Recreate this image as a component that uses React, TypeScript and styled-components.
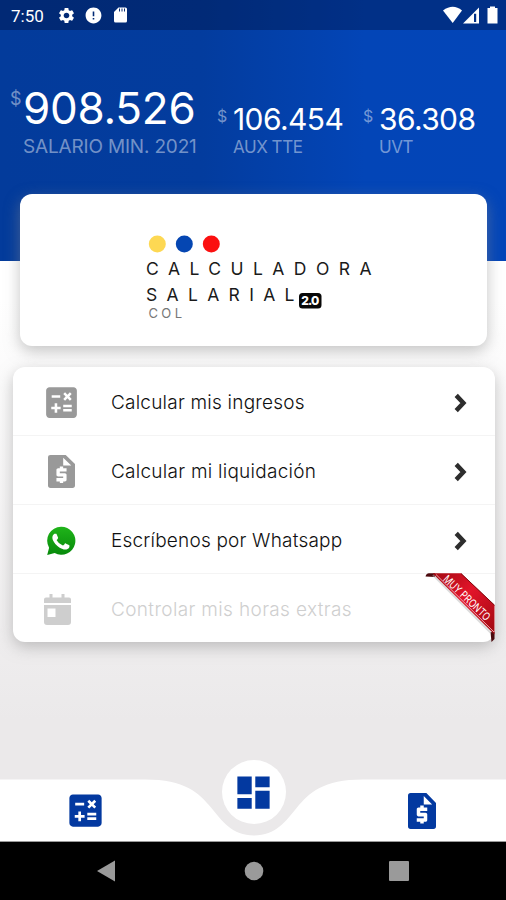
import React from "react";
import styled, { createGlobalStyle } from "styled-components";
import { MdCalculate, MdSettings, MdError, MdDashboard } from "react-icons/md";

const GlobalStyle = createGlobalStyle`
  *, *::before, *::after { box-sizing: border-box; }
  body { margin: 0; background: #ebe9ea; font-family: Inter, Roboto, sans-serif; }
`;

const Screen = styled.div`
  width: 506px;
  height: 900px;
  overflow: hidden;
  display: flex;
  flex-direction: column;
  background: linear-gradient(180deg, #ffffff 0, #ffffff 300px, #ebe9ea 720px);
`;

const Header = styled.header`
  height: 261px;
  flex: none;
  background: linear-gradient(90deg, #033b9b 0%, #033c9e 40%, #0345b7 72%, #0345b8 100%);
`;

const StatusBar = styled.div`
  height: 30px;
  padding: 0 7px 0 11px;
  display: flex;
  align-items: center;
  background: rgba(0, 10, 50, 0.36);
  color: #fff;
`;

const Clock = styled.span`
  width: 46px;
  font: 400 17px/30px Roboto, sans-serif;
  padding-top: 2px;
`;

const StatusIcons = styled.div`
  display: flex;
  align-items: center;
  gap: 8px;
  flex: 1;
`;

const SignalIcons = styled.div`
  display: flex;
  align-items: center;
`;

const Stats = styled.div`
  display: flex;
  align-items: flex-end;
  padding-left: 10px;
  height: 127px;
`;

const Stat = styled.div<{ $width: number }>`
  display: flex;
  width: ${(p) => p.$width}px;
`;

const Currency = styled.span<{ $large?: boolean }>`
  width: ${(p) => (p.$large ? 13 : 16)}px;
  font-size: ${(p) => (p.$large ? 18 : 16)}px;
  line-height: 20px;
  padding-top: ${(p) => (p.$large ? 3 : 2)}px;
  color: rgba(255, 255, 255, 0.45);
`;

const Amount = styled.div<{ $large?: boolean }>`
  font-size: ${(p) => (p.$large ? 44 : 30)}px;
  line-height: ${(p) => (p.$large ? 44 : 30)}px;
  letter-spacing: ${(p) => (p.$large ? -0.25 : -0.6)}px;
  color: #fff;
  white-space: nowrap;
`;

const Caption = styled.div<{ $large?: boolean }>`
  font-size: ${(p) => (p.$large ? 19 : 17)}px;
  line-height: 20px;
  margin-top: ${(p) => (p.$large ? 7 : 3)}px;
  letter-spacing: ${(p) => (p.$large ? -0.18 : -0.45)}px;
  color: rgba(255, 255, 255, 0.45);
  white-space: nowrap;
`;

const LogoCard = styled.section`
  flex: none;
  width: 467px;
  height: 152px;
  margin: -67px 0 0 20px;
  border-radius: 12px;
  background: #fff;
  box-shadow: 0 5px 15px rgba(140, 140, 140, 0.5);
`;

const Menu = styled.nav`
  flex: none;
  width: 482px;
  margin: 21px 0 0 13px;
  border-radius: 12px;
  background: #fff;
  box-shadow: 0 5px 15px rgba(140, 140, 140, 0.5);
`;

const MenuRow = styled.div<{ $disabled?: boolean }>`
  position: relative;
  height: 69px;
  padding: 3px 28px 0 28px;
  display: flex;
  align-items: center;
  color: ${(p) => (p.$disabled ? "#cfcfcf" : "#101010")};
  &:first-child { height: 68px; }
  & + & { border-top: 1px solid #f4f4f4; }
`;

const RowIcon = styled.div<{ $indent?: number }>`
  width: 70px;
  height: 40px;
  padding-left: ${(p) => p.$indent ?? 0}px;
  display: flex;
  align-items: center;
  color: #999;
  svg { display: block; }
`;

const RowLabel = styled.span<{ $spacing: number }>`
  flex: 1;
  font-size: 19px;
  font-weight: 300;
  line-height: 24px;
  letter-spacing: ${(p) => p.$spacing}px;
  white-space: nowrap;
`;

const Ribbon = styled.div`
  position: absolute;
  right: 0;
  top: -1px;
  width: 72px;
  height: 70px;
  svg { display: block; overflow: visible; }
`;

const BottomBar = styled.footer`
  margin-top: auto;
  flex: none;
  height: 82px;
  position: relative;
  border-bottom: 1px solid #9a9a9a;
`;

const BarShape = styled.svg`
  position: absolute;
  inset: 0;
`;

const BarItems = styled.div`
  position: relative;
  height: 81px;
  display: grid;
  grid-template-columns: 170px 167px 170px;
  justify-items: center;
  align-items: end;
  color: #0339a0;
  svg { display: block; }
`;

const BarItem = styled.div`
  height: 61px;
  display: flex;
  align-items: center;
`;

const HomeButton = styled.div`
  width: 64px;
  height: 64px;
  margin-bottom: 17px;
  border-radius: 50%;
  background: #fff;
  display: flex;
  align-items: center;
  justify-content: center;
`;

const SystemNav = styled.div`
  flex: none;
  height: 58px;
  background: #000;
  display: grid;
  grid-template-columns: 212px 83px 208px;
  justify-items: center;
  align-items: center;
  svg { display: block; }
`;

const MoneyFile = ({ width, height }: { width: number; height: number }) => (
  <svg width={width} height={height} viewBox="4 2 16 20" preserveAspectRatio="none" fill="currentColor">
    <path
      fillRule="evenodd"
      d="M5.5 2H14.5L20 7.5V20.5Q20 22 18.5 22H5.5Q4 22 4 20.5V3.5Q4 2 5.5 2ZM13 3.6V8.4H17.8ZM15 12H11v1h3c.55 0 1 .45 1 1v3c0 .55-.45 1-1 1h-1v1h-2v-1H9v-2h4v-1h-3c-.55 0-1-.45-1-1v-3c0-.55.45-1 1-1h1V9h2v1h2Z"
    />
  </svg>
);

const Chevron = () => (
  <svg width="13" height="20" viewBox="0 0 13 20">
    <path d="M2.2 2.4 9.4 10 2.2 17.6" fill="none" stroke="#2d2d2d" strokeWidth="4.5" />
  </svg>
);

const Whatsapp = () => (
  <svg width="30" height="30" viewBox="0 0 30 30">
    <defs>
      <linearGradient id="wa" x1="0" y1="0" x2="0" y2="1">
        <stop offset="0" stopColor="#20b41a" />
        <stop offset="1" stopColor="#078a0b" />
      </linearGradient>
    </defs>
    <path d="M15 .7A14 14 0 1 1 8.7 27L1.2 29 3.1 21.8A14 14 0 0 1 15 .7Z" fill="url(#wa)" />
    <path
      transform="translate(-1.7 -1.200) scale(1.400)"
      fill="#fff"
      d="M17.3 14.3c-.3-.15-1.8-.9-2-1s-.5-.15-.7.15-.8 1-1 1.150-.35.2-.65.05a8 8 0 0 1-4-3.500c-.3-.5.3-.5.85-1.600.1-.2.05-.35 0-.5L8.900 6.900c-.25-.6-.5-.5-.7-.5h-.6c-.2 0-.55.1-.8.4s-1.050 1-1.050 2.500 1.080 2.900 1.230 3.100 2.100 3.200 5.150 4.500c1.900.8 2.650.9 3.600.75.6-.1 1.800-.7 2.050-1.450s.25-1.300.2-1.450-.3-.2-.6-.35Z"
    />
  </svg>
);

const CalendarIcon = () => (
  <svg width="27" height="32" viewBox="0 0 27 32" fill="#cecece">
    <path d="M5.500 0H8.500v3.500h9V0h3v3.500H25q2 0 2 2V9H0V5.500q0-2 2-2h3.500Z" />
    <path fillRule="evenodd" d="M0 11h27v17q0 3-3 3H3q-3 0-3-3ZM3.500 14.500v8.500h8v-8.500Z" />
  </svg>
);

const Logo = () => (
  <svg width="467" height="152" viewBox="20 194 467 152">
    <circle cx="157.300" cy="244" r="8.500" fill="#fdd853" />
    <circle cx="184.300" cy="244" r="8.500" fill="#0546b2" />
    <circle cx="211.300" cy="244" r="8.500" fill="#fb1010" />
    <g fontFamily="Inter, sans-serif" fill="#1a1a1a">
      <text x="146" y="274.700" fontSize="17.500" textLength="225.500" lengthAdjust="spacing">CALCULADORA</text>
      <text x="146" y="300.700" fontSize="17.500" textLength="148.500" lengthAdjust="spacing">SALARIAL</text>
      <text x="148.500" y="318" fontSize="13" fill="#777" textLength="33.500" lengthAdjust="spacing">COL</text>
    </g>
    <rect x="299" y="293" width="22.500" height="15.500" rx="3.500" fill="#080808" />
    <text x="301.300" y="305.200" fontFamily="Inter, sans-serif" fontWeight="800" fontSize="12" fill="#fff" textLength="18">2.0</text>
  </svg>
);

const RibbonArt = () => (
  <svg width="72" height="70" viewBox="423 573 72 70">
    <defs>
      <linearGradient id="rb" x1="433" y1="573" x2="495" y2="633" gradientUnits="userSpaceOnUse">
        <stop offset="0" stopColor="#a30a12" />
        <stop offset=".45" stopColor="#e3142a" />
        <stop offset="1" stopColor="#a00810" />
      </linearGradient>
    </defs>
    <path d="M425.500 576.500Q426 573.500 429 573.300H435V577Z" fill="#4b090d" />
    <path d="M490.500 632H494.500V639L491.500 642Z" fill="#4b090d" />
    <path d="M433 575 491 633" stroke="#bbb" strokeWidth="2" opacity=".5" />
    <path d="M432.500 573.300H461L494.500 605V634.500Z" fill="url(#rb)" />
    <path d="M436 574.500 494 632" stroke="#f2b5b9" strokeWidth=".9" />
    <path d="M461 573.500 494.500 605.200" stroke="#7e0a0d" strokeWidth="1" />
    <text
      transform="translate(442.500 580) rotate(43.500)"
      fontFamily="Inter, sans-serif"
      fontSize="11"
      fill="#fff"
      textLength="60"
      lengthAdjust="spacingAndGlyphs"
    >
      MUY PRONTO
    </text>
  </svg>
);

const stats = [
  { amount: "908.526", caption: "SALARIO MIN. 2021", width: 207, large: true },
  { amount: "106.454", caption: "AUX TTE", width: 146, large: false },
  { amount: "36.308", caption: "UVT", width: 140, large: false },
];

export default function App() {
  return (
    <>
      <GlobalStyle />
      <Screen>
        <Header>
          <StatusBar>
            <Clock>7:50</Clock>
            <StatusIcons>
              <MdSettings size={19} />
              <MdError size={19} />
              <svg width="18" height="18" viewBox="-1.500 0 18 18">
                <path d="M6 1.500H13Q14.500 1.500 14.500 3V15Q14.500 16.500 13 16.500H3Q1.500 16.500 1.500 15V6Z" fill="#fff" />
                <path d="M7 2.500v3M9.500 2.500v3M12 2.500v3" stroke="#0a2f72" strokeWidth="1" />
              </svg>
            </StatusIcons>
            <SignalIcons>
              <svg width="56" height="18" viewBox="0 0 56 18" fill="#fff">
                <path d="M0 4.500Q10-3 19 4.500L9.700 17Z" />
                <path fillRule="evenodd" d="M20 17.500 36 1.500V17.500ZM31 7.800V16h2.200V7.800Z" />
                <path d="M47 .5h5V2h2.500V17.500H44.500V2H47Z" />
              </svg>
            </SignalIcons>
          </StatusBar>
          <Stats>
            {stats.map((s) => (
              <Stat key={s.caption} $width={s.width}>
                <Currency $large={s.large}>$</Currency>
                <div>
                  <Amount $large={s.large}>{s.amount}</Amount>
                  <Caption $large={s.large}>{s.caption}</Caption>
                </div>
              </Stat>
            ))}
          </Stats>
        </Header>
        <LogoCard>
          <Logo />
        </LogoCard>
        <Menu>
          <MenuRow>
            <RowIcon><MdCalculate size={41} /></RowIcon>
            <RowLabel $spacing={0.22}>Calcular mis ingresos</RowLabel>
            <Chevron />
          </MenuRow>
          <MenuRow>
            <RowIcon $indent={7}><MoneyFile width={27} height={33} /></RowIcon>
            <RowLabel $spacing={0.26}>Calcular mi liquidación</RowLabel>
            <Chevron />
          </MenuRow>
          <MenuRow>
            <RowIcon $indent={5}><Whatsapp /></RowIcon>
            <RowLabel $spacing={0.2}>Escríbenos por Whatsapp</RowLabel>
            <Chevron />
          </MenuRow>
          <MenuRow $disabled>
            <RowIcon $indent={3}><CalendarIcon /></RowIcon>
            <RowLabel $spacing={0.36}>Controlar mis horas extras</RowLabel>
            <Ribbon><RibbonArt /></Ribbon>
          </MenuRow>
        </Menu>
        <BottomBar>
          <BarShape width="506" height="81" viewBox="0 760 506 81">
            <path
              d="M0 779.500H145C185 779.500 199 793 211 807.500C222 821 232 835.500 254 835.500C276 835.500 286 821 297 807.500C309 793 323 779.500 363 779.500H506V841H0Z"
              fill="#fff"
            />
          </BarShape>
          <BarItems>
            <BarItem><MdCalculate size={43} /></BarItem>
            <HomeButton><MdDashboard size={43} /></HomeButton>
            <BarItem><MoneyFile width={28} height={36} /></BarItem>
          </BarItems>
        </BottomBar>
        <SystemNav>
          <svg width="18" height="22" viewBox="0 0 18 22"><path d="M18 .5V21.500L0 11Z" fill="#9a9a9a" /></svg>
          <svg width="20" height="20" viewBox="0 0 20 20"><circle cx="10" cy="10" r="9.300" fill="#9a9a9a" /></svg>
          <svg width="20" height="20" viewBox="0 0 20 20"><rect width="20" height="20" rx="1" fill="#9a9a9a" /></svg>
        </SystemNav>
      </Screen>
    </>
  );
}
